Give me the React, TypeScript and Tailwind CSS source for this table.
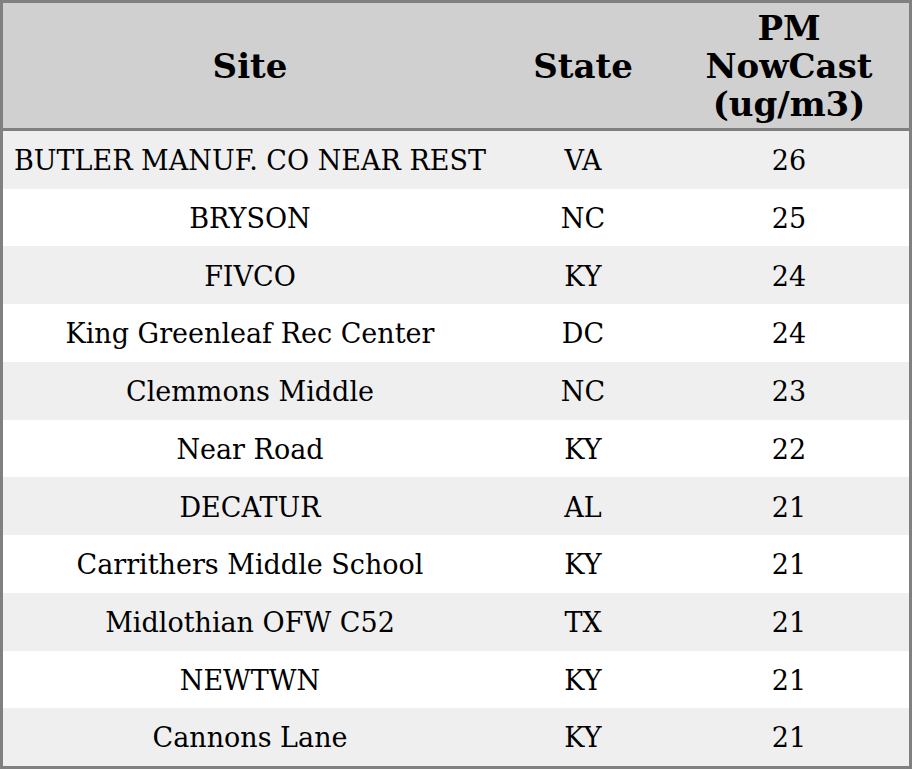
const rows: [string, string, string][] = [
  ["BUTLER MANUF. CO NEAR REST", "VA", "26"],
  ["BRYSON", "NC", "25"],
  ["FIVCO", "KY", "24"],
  ["King Greenleaf Rec Center", "DC", "24"],
  ["Clemmons Middle", "NC", "23"],
  ["Near Road", "KY", "22"],
  ["DECATUR", "AL", "21"],
  ["Carrithers Middle School", "KY", "21"],
  ["Midlothian OFW C52", "TX", "21"],
  ["NEWTWN", "KY", "21"],
  ["Cannons Lane", "KY", "21"],
]

export default function App() {
  return (
    <div className="w-[912px] h-[769px] border-[3px] border-[#808080] bg-white text-black font-['DejaVu_Serif',serif] flex flex-col">
      <div className="h-[128px] shrink-0 flex bg-[#d0d0d0] border-b-[3px] border-[#808080] text-[34px] font-bold leading-[38px]">
        <div className="w-[494px] flex items-center justify-center">Site</div>
        <div className="w-[172px] flex items-center justify-center">State</div>
        <div className="flex-1 flex flex-col items-center justify-center text-center">
          <span>PM</span>
          <span>NowCast</span>
          <span>(ug/m3)</span>
        </div>
      </div>
      <div className="flex-1 flex flex-col text-[27px]">
        {rows.map(([site, state, pm], i) => (
          <div key={i} className={`flex-1 flex items-center pt-[3px] ${i % 2 === 0 ? "bg-[#efefef]" : "bg-white"}`}>
            <div className="w-[494px] text-center">{site}</div>
            <div className="w-[172px] text-center">{state}</div>
            <div className="flex-1 text-center">{pm}</div>
          </div>
        ))}
      </div>
    </div>
  )
}
